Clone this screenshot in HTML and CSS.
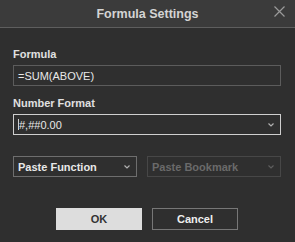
FILE: index.html
```html
<!DOCTYPE html>
<html lang="en">
<head>
    <meta charset="UTF-8">
    <title>Formula Settings</title>
    <link rel="stylesheet" href="styles.css">
</head>
<body>
    <div class="dialog">
        <div class="header">
            <span class="title">Formula Settings</span>
            <svg class="close" width="11" height="11" viewBox="0 0 11 11">
                <path d="M0.5 0.5 L10.5 10.5 M10.5 0.5 L0.5 10.5" stroke="#9a9a9a" stroke-width="1.2" fill="none"/>
            </svg>
        </div>
        <div class="content">
            <div class="label">Formula</div>
            <div class="field">=SUM(ABOVE)</div>

            <div class="label">Number Format</div>
            <div class="field select focused">
                <span class="value"><span class="caret"></span>#,##0.00</span>
                <svg class="chevron" width="6" height="4" viewBox="0 0 6 4"><path d="M0.5 0.5 L3 3 L5.5 0.5" stroke="#b0b0b0" stroke-width="1.2" fill="none"/></svg>
            </div>

            <div class="paste-row">
                <div class="field select function">
                    <span class="value strong">Paste Function</span>
                    <svg class="chevron" width="6" height="4" viewBox="0 0 6 4"><path d="M0.5 0.5 L3 3 L5.5 0.5" stroke="#b0b0b0" stroke-width="1.2" fill="none"/></svg>
                </div>
                <div class="field select disabled">
                    <span class="value strong">Paste Bookmark</span>
                    <svg class="chevron" width="6" height="4" viewBox="0 0 6 4"><path d="M0.5 0.5 L3 3 L5.5 0.5" stroke="#5e5e5e" stroke-width="1.2" fill="none"/></svg>
                </div>
            </div>

            <div class="buttons">
                <button class="btn primary">OK</button>
                <button class="btn">Cancel</button>
            </div>
        </div>
    </div>
</body>
</html>
```

FILE: styles.css
```css
body {
    margin: 0;
    font-family: "Liberation Sans", Arial, sans-serif;
    background-color: #2f2f2f;
}
.dialog {
    width: 295px;
    height: 242px;
    background-color: #2f2f2f;
}
.header {
    height: 27px;
    background-color: #3b3b3b;
    border-bottom: 1px solid #5e5e5e;
    display: flex;
    align-items: center;
    justify-content: center;
    position: relative;
}
.title {
    color: #d4d4d4;
    font-size: 12.5px;
    font-weight: bold;
}
.close {
    position: absolute;
    right: 10px;
    top: 6px;
}
.content {
    padding: 20px 14px 0 13px;
}
.label {
    color: #e0e0e0;
    font-size: 11px;
    font-weight: bold;
    line-height: 13px;
    margin-bottom: 4px;
}
.field {
    height: 21px;
    box-sizing: border-box;
    border: 1px solid #5c5c5c;
    color: #e8e8e8;
    font-size: 11px;
    padding: 0 6px 0 4px;
    display: flex;
    align-items: center;
    margin-bottom: 11px;
}
.select {
    justify-content: space-between;
}
.focused {
    border-color: #cfcfcf;
    margin-bottom: 21px;
}
.caret {
    display: inline-block;
    width: 1px;
    height: 11px;
    background-color: #d0d0d0;
}
.value {
    display: flex;
    align-items: center;
}
.strong {
    font-weight: bold;
}
.paste-row {
    display: flex;
    gap: 10px;
}
.paste-row .field {
    margin-bottom: 0;
    border-color: #6e6e6e;
}
.paste-row .function {
    width: 124px;
}
.paste-row .disabled {
    flex: 1;
    border-color: #474747;
    color: #6a6a6a;
}
.buttons {
    display: flex;
    justify-content: center;
    gap: 10px;
    margin-top: 31px;
}
.btn {
    width: 86px;
    height: 22px;
    box-sizing: border-box;
    font-family: "Liberation Sans", Arial, sans-serif;
    font-size: 11px;
    font-weight: bold;
    color: #eeeeee;
    background-color: #2f2f2f;
    border: 1px solid #777777;
    padding: 0;
}
.primary {
    background-color: #dddddd;
    border-color: #dddddd;
    color: #333333;
}
```
